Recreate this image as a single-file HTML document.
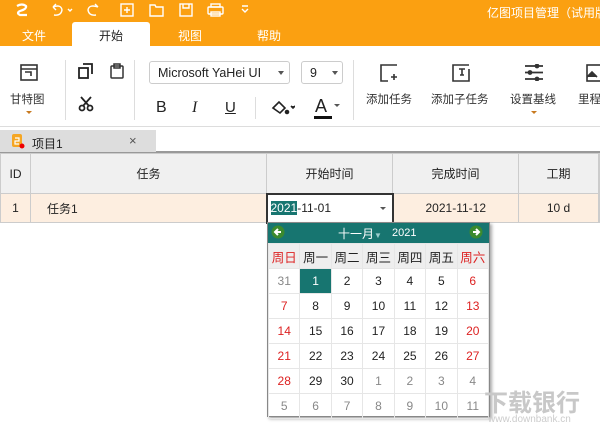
<!DOCTYPE html>
<html><head><meta charset="utf-8"><style>
*{margin:0;padding:0;box-sizing:border-box}
body{width:600px;height:431px;overflow:hidden;background:#fff;font-family:"Liberation Sans","Noto Sans CJK SC",sans-serif;font-size:12px;color:#222;position:relative}
.a{position:absolute}
.top{left:0;top:0;width:600px;height:46px;background:#fba011}
.tab{color:#fff;font-size:12px;top:27px}
.rb{top:46px;left:0;width:600px;height:81px;background:#fff;border-bottom:1px solid #ddd}
.lbl{font-size:11.5px;color:#333;white-space:nowrap}
.sep{width:1px;background:#ddd;top:60px;height:60px}
.grid td{border:1px solid #ccc;text-align:center}
table{border-collapse:collapse;table-layout:fixed}
.cal td{border:1px solid #e6e6e6;text-align:center;height:25px;font-family:"Liberation Sans","Noto Sans CJK SC",sans-serif;font-size:12px}
.wk td{font-family:"Noto Sans CJK SC",sans-serif;font-size:12.5px}
.r{color:#d22}.g{color:#888}
</style></head><body>
<div class="a top"></div>
<svg class="a" style="left:14px;top:3px" width="16" height="14" viewBox="0 0 16 14"><path d="M3 3 Q8 0 12 3 Q13 6 6 8 Q2 10 6 12 L13 12" stroke="#fff" stroke-width="2.2" fill="none"/></svg>
<svg class="a" style="left:50px;top:2px" width="210" height="16" viewBox="0 0 210 16" fill="none" stroke="#fff" stroke-width="1.4">
<path d="M3 5 Q11 2 12 8 Q11 14 4 13 M3 5 L6 2 M3 5 L6 8"/><path d="M18 7 l2 2 2-2" />
<path d="M48 5 Q39 2 38 8 Q39 14 46 13 M48 5 L45 2"/>
<rect x="71" y="2" width="12" height="12"/><path d="M77 5v6M74 8h6"/>
<path d="M100 3h5l1 2h7v9h-13z"/>
<rect x="130" y="2" width="12" height="12"/><path d="M133 2v4h6v-4"/>
<rect x="158" y="5" width="15" height="7" rx="1"/><rect x="161" y="2" width="9" height="3"/><rect x="161" y="10" width="9" height="4"/>
<path d="M192 7l3 3 3-3M192 4h6"/></svg>
<div class="a" style="left:487px;top:4px;color:#fff;font-size:12px;white-space:nowrap">亿图项目管理（试用版</div>
<div class="a tab" style="left:22px">文件</div>
<div class="a" style="left:72px;top:22px;width:78px;height:24px;background:#fff;border-radius:3px 3px 0 0"></div>
<div class="a tab" style="left:99px;color:#222">开始</div>
<div class="a tab" style="left:178px">视图</div>
<div class="a tab" style="left:257px">帮助</div>
<div class="a rb"></div>
<svg class="a" style="left:20px;top:64px" width="18" height="17" viewBox="0 0 18 17" fill="none" stroke="#333" stroke-width="1.6"><rect x="1" y="1" width="16" height="15"/><path d="M1 5h16M5 8h6v4"/></svg>
<div class="a lbl" style="left:10px;top:91px">甘特图</div>
<div class="a" style="left:26px;top:111px;border:3px solid transparent;border-top:3px solid #c87a20"></div>
<div class="a sep" style="left:65px"></div>
<svg class="a" style="left:78px;top:63px" width="16" height="16" viewBox="0 0 16 16" fill="none" stroke="#222" stroke-width="1.8"><rect x="1" y="5" width="9" height="10"/><path d="M5 1h9v10"/></svg>
<svg class="a" style="left:110px;top:63px" width="14" height="16" viewBox="0 0 14 16" fill="none" stroke="#333" stroke-width="1.5"><rect x="1" y="3" width="12" height="12" rx="1"/><rect x="4" y="1" width="6" height="4"/></svg>
<svg class="a" style="left:78px;top:96px" width="16" height="16" viewBox="0 0 16 16" fill="none" stroke="#222" stroke-width="1.8"><circle cx="4" cy="12" r="2.5"/><circle cx="12" cy="12" r="2.5"/><path d="M5 10L13 1M11 10L3 1"/></svg>
<div class="a sep" style="left:134px"></div>
<div class="a" style="left:149px;top:61px;width:141px;height:23px;border:1px solid #ccc;border-radius:3px;padding:4px 8px;font-size:12.5px">Microsoft YaHei UI</div>
<div class="a" style="left:278px;top:71px;border:3px solid transparent;border-top:4px solid #555"></div>
<div class="a" style="left:301px;top:61px;width:42px;height:23px;border:1px solid #ccc;border-radius:3px;padding:4px 8px;font-size:12.5px">9</div>
<div class="a" style="left:332px;top:71px;border:3px solid transparent;border-top:4px solid #555"></div>
<div class="a" style="left:156px;top:99px;font-size:16px;color:#222">B</div>
<div class="a" style="left:192px;top:99px;font-size:16px;font-style:italic;font-family:'Liberation Serif',serif">I</div>
<div class="a" style="left:225px;top:99px;font-size:15px;text-decoration:underline">U</div>
<div class="a sep" style="left:255px;top:97px;height:22px"></div>
<svg class="a" style="left:271px;top:100px" width="24" height="16" viewBox="0 0 24 16" fill="none" stroke="#222" stroke-width="1.6"><path d="M2 8l6-6 6 6-5 5z"/><circle cx="16" cy="12" r="1.5" fill="#222"/><path d="M20 6l2 2 2-2" fill="#444"/></svg>
<div class="a" style="left:315px;top:96px;font-size:18px">A</div>
<div class="a" style="left:314px;top:116px;width:18px;height:3px;background:#111"></div>
<div class="a" style="left:334px;top:104px;border:3px solid transparent;border-top:3px solid #555"></div>
<div class="a sep" style="left:353px"></div>
<svg class="a" style="left:380px;top:64px" width="18" height="18" viewBox="0 0 18 18" fill="none" stroke="#333" stroke-width="1.6"><path d="M17 1H1v16h7M11 13h6M14 10v6"/></svg>
<div class="a lbl" style="left:366px;top:91px">添加任务</div>
<svg class="a" style="left:452px;top:64px" width="18" height="18" viewBox="0 0 18 18" fill="none" stroke="#333" stroke-width="1.6"><path d="M17 1H1v16h16V5M7 5h6M10 5v6M8 11h4"/></svg>
<div class="a lbl" style="left:431px;top:91px">添加子任务</div>
<svg class="a" style="left:524px;top:64px" width="20" height="17" viewBox="0 0 20 17" fill="none" stroke="#333" stroke-width="1.8"><path d="M1 2h18M1 8.5h18M1 15h18"/><circle cx="13" cy="2" r="1.5" fill="#333"/><circle cx="6" cy="8.5" r="1.5" fill="#333"/><circle cx="13" cy="15" r="1.5" fill="#333"/></svg>
<div class="a lbl" style="left:510px;top:91px">设置基线</div>
<div class="a" style="left:531px;top:111px;border:3px solid transparent;border-top:3px solid #c87a20"></div>
<svg class="a" style="left:586px;top:64px" width="14" height="18" viewBox="0 0 14 18" fill="none" stroke="#333" stroke-width="1.6"><rect x="1" y="1" width="16" height="16"/><path d="M1 13l5-5 5 5" fill="#333"/></svg>
<div class="a lbl" style="left:578px;top:91px">里程</div>
<div class="a" style="left:0;top:128px;width:600px;height:25px;background:#fff;border-bottom:2px solid #999"></div>
<div class="a" style="left:0;top:130px;width:156px;height:22px;background:#ddd"></div>
<svg class="a" style="left:11px;top:133px" width="14" height="16" viewBox="0 0 14 16"><rect x="1" y="1" width="10" height="13" rx="2" fill="#f5a623"/><path d="M4 5h4v3h-4v3h4" stroke="#fff" stroke-width="1.2" fill="none"/><circle cx="11" cy="13" r="2.5" fill="#e00"/></svg>
<div class="a" style="left:32px;top:135px;font-size:12px">项目1</div>
<div class="a" style="left:129px;top:133px;font-size:13px;color:#555">×</div>
<table class="a grid" style="left:0;top:153px;width:600px">
<colgroup><col style="width:30px"><col style="width:236px"><col style="width:126px"><col style="width:126px"><col style="width:80px"><col></colgroup>
<tr style="height:40px;background:#f0f0f0"><td>ID</td><td>任务</td><td>开始时间</td><td>完成时间</td><td>工期</td><td></td></tr>
<tr style="height:29px;background:#fdeee0"><td>1</td><td style="text-align:left;padding-left:16px">任务1</td><td style="background:#fff;border:2px solid #333;text-align:left;padding-left:3px"><span style="background:#177570;color:#fff">2021</span>-11-01</td><td>2021-11-12</td><td>10 d</td><td></td></tr>
</table>
<div class="a" style="left:380px;top:207px;border:3px solid transparent;border-top:3px solid #555"></div>
<div class="a" style="left:267px;top:222px;width:223px;height:195px;background:#fff;border:1px solid #888;box-shadow:2px 2px 3px #aaa"></div>
<div class="a" style="left:268px;top:223px;width:221px;height:20px;background:#177570"></div>
<svg class="a" style="left:271px;top:225px" width="14" height="14"><circle cx="7" cy="7" r="6.5" fill="#3b8a2e"/><path d="M10 7H4M7 4L4 7l3 3" stroke="#fff" stroke-width="2" fill="none"/></svg>
<svg class="a" style="left:469px;top:225px" width="14" height="14"><circle cx="7" cy="7" r="6.5" fill="#3b8a2e"/><path d="M4 7h6M7 4l3 3-3 3" stroke="#fff" stroke-width="2" fill="none"/></svg>
<div class="a" style="left:338px;top:225px;color:#fff;font-size:12px">十一月<span style="font-size:8px;color:#9cc">▼</span></div>
<div class="a" style="left:392px;top:227px;color:#fff;font-size:11px">2021</div>
<table class="a cal" style="left:268px;top:243px;width:221px">
<tr class="wk" style="background:#eee"><td class="r">周日</td><td>周一</td><td>周二</td><td>周三</td><td>周四</td><td>周五</td><td class="r">周六</td></tr>
<tr><td class="g">31</td><td style="background:#177570;color:#fff">1</td><td>2</td><td>3</td><td>4</td><td>5</td><td class="r">6</td></tr>
<tr><td class="r">7</td><td>8</td><td>9</td><td>10</td><td>11</td><td>12</td><td class="r">13</td></tr>
<tr><td class="r">14</td><td>15</td><td>16</td><td>17</td><td>18</td><td>19</td><td class="r">20</td></tr>
<tr><td class="r">21</td><td>22</td><td>23</td><td>24</td><td>25</td><td>26</td><td class="r">27</td></tr>
<tr><td class="r">28</td><td>29</td><td>30</td><td class="g">1</td><td class="g">2</td><td class="g">3</td><td class="g">4</td></tr>
<tr><td class="g">5</td><td class="g">6</td><td class="g">7</td><td class="g">8</td><td class="g">9</td><td class="g">10</td><td class="g">11</td></tr>
</table>
<div class="a" style="left:484px;top:383px;font-size:24px;font-weight:bold;color:#c8c8c8;white-space:nowrap">下载银行</div>
<div class="a" style="left:488px;top:414px;font-size:10px;color:#ccc">www.downbank.cn</div>
</body></html>
